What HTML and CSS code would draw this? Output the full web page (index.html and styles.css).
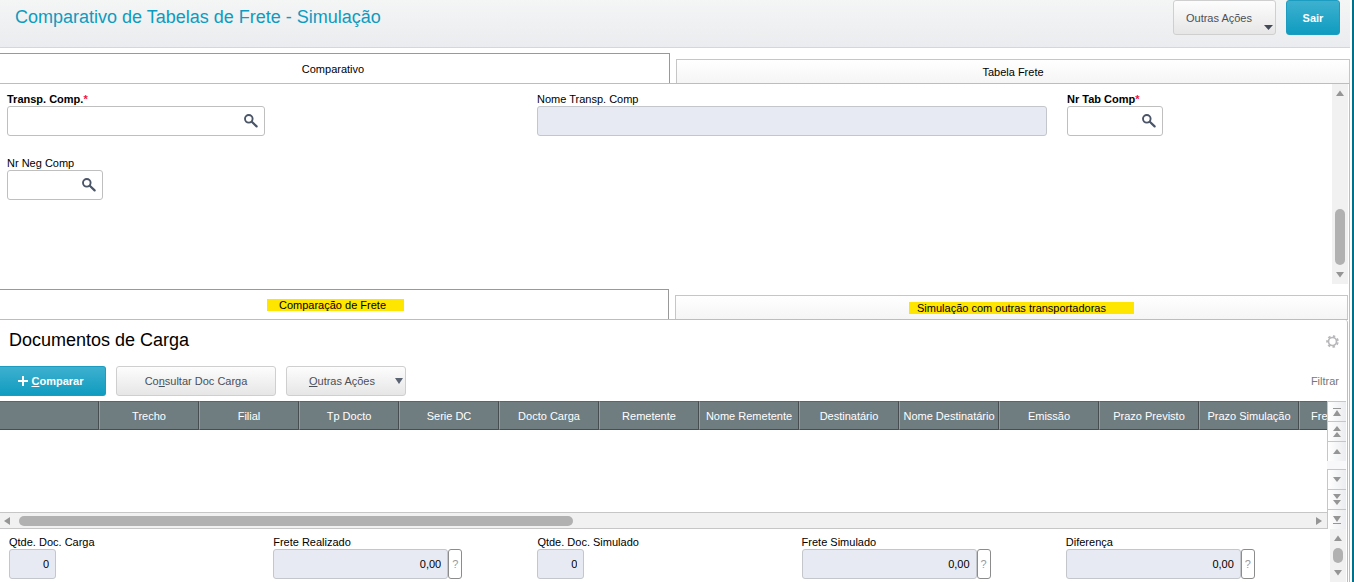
FILE: index.html
```html
<!DOCTYPE html>
<html lang="pt-BR">
<head>
    <meta charset="UTF-8">
    <meta name="viewport" content="width=device-width, initial-scale=1.0">
    <title>Comparativo de Tabelas de Frete - Simulação</title>
    <link rel="stylesheet" href="styles.css">
</head>
<body>
    <!-- Shared icons -->
    <svg class="icon-defs" width="0" height="0" aria-hidden="true">
        <symbol id="icon-search" viewBox="0 0 14 14">
            <circle cx="4.8" cy="4.8" r="3.8" fill="none" stroke="#4a5568" stroke-width="1.9"/>
            <path d="M7.8 7.8l4.8 4.6" stroke="#4a5568" stroke-width="2.2" stroke-linecap="round"/>
        </symbol>
        <symbol id="icon-up" viewBox="0 0 8 6"><path d="M0 6L4 0.5L8 6z"/></symbol>
        <symbol id="icon-down" viewBox="0 0 8 6"><path d="M0 0L4 5.5L8 0z"/></symbol>
    </svg>

    <div class="page">
        <header class="header">
            <h1>Comparativo de Tabelas de Frete - Simulação</h1>
            <div class="header-actions">
                <button type="button" class="btn btn-menu">Outras Ações
                    <svg class="caret" width="9" height="5" viewBox="0 0 9 5"><path d="M0 0h9L4.5 5z" fill="#434a57"/></svg>
                </button>
                <button type="button" class="btn btn-primary btn-exit">Sair</button>
            </div>
        </header>

        <main class="main">
            <nav class="tabs">
                <button type="button" class="tab active">Comparativo</button>
                <button type="button" class="tab">Tabela Frete</button>
            </nav>

            <section class="panel-form">
                <div class="form-grid">
                    <div class="field">
                        <label for="transp" class="required">Transp. Comp.<span>*</span></label>
                        <div class="lookup lookup-wide">
                            <input type="text" id="transp">
                            <button type="button" aria-label="Pesquisar transportadora"><svg width="14" height="14"><use href="#icon-search"/></svg></button>
                        </div>
                    </div>
                    <div class="field field-name">
                        <label for="nome">Nome Transp. Comp</label>
                        <input type="text" id="nome" class="readonly" readonly>
                    </div>
                    <div class="field">
                        <label for="tab" class="required">Nr Tab Comp<span>*</span></label>
                        <div class="lookup">
                            <input type="text" id="tab">
                            <button type="button" aria-label="Pesquisar tabela"><svg width="14" height="14"><use href="#icon-search"/></svg></button>
                        </div>
                    </div>
                    <div class="field">
                        <label for="neg">Nr Neg Comp</label>
                        <div class="lookup">
                            <input type="text" id="neg">
                            <button type="button" aria-label="Pesquisar negociação"><svg width="14" height="14"><use href="#icon-search"/></svg></button>
                        </div>
                    </div>
                </div>
                <div class="scroll-v">
                    <svg width="8" height="6"><use href="#icon-up"/></svg>
                    <div class="thumb thumb-form"></div>
                    <svg width="8" height="6"><use href="#icon-down"/></svg>
                </div>
            </section>

            <div class="lower">
                <nav class="tabs">
                    <button type="button" class="tab active"><mark class="mark-compare">Comparação de Frete</mark></button>
                    <button type="button" class="tab"><mark class="mark-simulate">Simulação com outras transportadoras</mark></button>
                </nav>

                <section class="panel-docs">
                    <div class="docs-head">
                        <h2>Documentos de Carga</h2>
                        <button type="button" class="gear" aria-label="Configurar">
                            <svg width="13" height="13" viewBox="0 0 14 14" fill="none" stroke="#b8b8bb">
                                <circle cx="7" cy="7" r="4.3" stroke-width="1.8"/>
                                <circle cx="7" cy="7" r="5.8" stroke-width="2" stroke-dasharray="2.6 2.606" transform="rotate(10 7 7)"/>
                            </svg>
                        </button>
                    </div>

                    <div class="toolbar">
                        <button type="button" class="btn btn-primary btn-compare">
                            <svg width="10" height="10" viewBox="0 0 10 10"><path d="M5 0v10M0 5h10" stroke="#fff" stroke-width="2"/></svg>
                            <span><u>C</u>omparar</span>
                        </button>
                        <button type="button" class="btn btn-docs"><span>Co<u>n</u>sultar Doc Carga</span></button>
                        <button type="button" class="btn btn-more"><span><u>O</u>utras Ações</span>
                            <svg width="8" height="6" viewBox="0 0 8 6"><path d="M0 0h8L4 6z" fill="#5b6472"/></svg>
                        </button>
                        <a href="#" class="filter">Filtrar</a>
                    </div>

                    <div class="grid">
                        <div class="grid-view">
                            <div class="grid-body">
                                <table>
                                    <thead>
                                        <tr>
                                            <th class="col-first"></th>
                                            <th>Trecho</th>
                                            <th>Filial</th>
                                            <th>Tp Docto</th>
                                            <th>Serie DC</th>
                                            <th>Docto Carga</th>
                                            <th>Remetente</th>
                                            <th>Nome Remetente</th>
                                            <th>Destinatário</th>
                                            <th>Nome Destinatário</th>
                                            <th>Emissão</th>
                                            <th>Prazo Previsto</th>
                                            <th>Prazo Simulação</th>
                                            <th class="col-cut">Fre</th>
                                        </tr>
                                    </thead>
                                    <tbody></tbody>
                                </table>
                            </div>
                            <div class="scroll-h">
                                <svg width="6" height="8" viewBox="0 0 6 8"><path d="M6 0v8L0 4z"/></svg>
                                <div class="track"><div class="thumb thumb-grid"></div></div>
                                <svg width="6" height="8" viewBox="0 0 6 8"><path d="M0 0v8L6 4z"/></svg>
                            </div>
                        </div>
                        <div class="grid-nav">
                            <div class="nav-group">
                                <button type="button" aria-label="Primeiro"><svg width="8" height="8" viewBox="0 0 8 8"><path d="M0 0h8v1H0zM0 8L4 2L8 8z"/></svg></button>
                                <button type="button" aria-label="Página anterior"><svg width="8" height="11" viewBox="0 0 8 11"><path d="M0 5L4 0L8 5zM0 11L4 6L8 11z"/></svg></button>
                                <button type="button" aria-label="Anterior"><svg width="8" height="5" viewBox="0 0 8 5"><path d="M0 5L4 0L8 5z"/></svg></button>
                            </div>
                            <div class="nav-group">
                                <button type="button" aria-label="Próximo"><svg width="8" height="5" viewBox="0 0 8 5"><path d="M0 0L4 5L8 0z"/></svg></button>
                                <button type="button" aria-label="Próxima página"><svg width="8" height="11" viewBox="0 0 8 11"><path d="M0 0L4 5L8 0zM0 6L4 11L8 6z"/></svg></button>
                                <button type="button" aria-label="Último"><svg width="8" height="8" viewBox="0 0 8 8"><path d="M0 0L4 6L8 0zM0 7h8v1H0z"/></svg></button>
                            </div>
                        </div>
                    </div>

                    <div class="totals">
                        <div class="totals-grid">
                            <div class="field">
                                <label for="qtdCarga">Qtde. Doc. Carga</label>
                                <input type="text" id="qtdCarga" class="readonly count" value="0" readonly>
                            </div>
                            <div class="field">
                                <label for="realizado">Frete Realizado</label>
                                <div class="amount">
                                    <input type="text" id="realizado" class="readonly" value="0,00" readonly>
                                    <button type="button" class="help">?</button>
                                </div>
                            </div>
                            <div class="field">
                                <label for="qtdSimulado">Qtde. Doc. Simulado</label>
                                <input type="text" id="qtdSimulado" class="readonly count" value="0" readonly>
                            </div>
                            <div class="field">
                                <label for="simulado">Frete Simulado</label>
                                <div class="amount">
                                    <input type="text" id="simulado" class="readonly" value="0,00" readonly>
                                    <button type="button" class="help">?</button>
                                </div>
                            </div>
                            <div class="field">
                                <label for="diferenca">Diferença</label>
                                <div class="amount">
                                    <input type="text" id="diferenca" class="readonly" value="0,00" readonly>
                                    <button type="button" class="help">?</button>
                                </div>
                            </div>
                        </div>
                        <div class="scroll-v">
                            <svg width="8" height="6"><use href="#icon-up"/></svg>
                            <div class="thumb thumb-totals"></div>
                            <svg width="8" height="6"><use href="#icon-down"/></svg>
                        </div>
                    </div>
                </section>
            </div>
        </main>
    </div>
</body>
</html>
```
FILE: styles.css
```css
* {
    box-sizing: border-box;
}

body {
    margin: 0;
    font-family: "Liberation Sans", Arial, sans-serif;
    font-size: 11px;
    line-height: 13px;
    color: #000;
    background-color: #fff;
}

button,
input {
    font: inherit;
    color: inherit;
    margin: 0;
}

button {
    cursor: pointer;
}

svg {
    display: block;
    flex: none;
}

.icon-defs {
    position: absolute;
}

.page {
    display: flex;
    flex-direction: column;
    height: 100vh;
    padding-right: 2px;
    border-right: 2px solid #00718a;
    overflow: hidden;
}

/* Header */
.header {
    display: flex;
    justify-content: space-between;
    align-items: flex-start;
    flex: none;
    height: 48px;
    padding: 0 10px 0 15px;
    background: linear-gradient(#f4f5f5, #ebecef);
    border-bottom: 1px solid #d5d6d8;
}

.header h1 {
    margin: 6px 0 0;
    font-size: 18px;
    line-height: 22px;
    font-weight: normal;
    color: #0d9bc0;
}

.header-actions {
    display: flex;
    gap: 10px;
}

.header-actions .btn {
    height: 35px;
    padding-top: 2px;
}

.btn {
    display: flex;
    align-items: center;
    justify-content: center;
    height: 30px;
    padding: 0;
    border: 1px solid #cfcfcf;
    border-radius: 3px;
    background: linear-gradient(#fdfdfd, #e6e6e6);
    color: #4b4f59;
}

.btn-primary {
    border-color: #1c9cc0;
    background: linear-gradient(#3eb0cf, #0f9cc0);
    color: #fff;
    font-weight: bold;
}

.btn-menu {
    gap: 12px;
    padding: 0 2px 0 12px;
}

.btn-menu .caret {
    align-self: flex-end;
    margin-bottom: 4px;
}

.btn-exit {
    width: 54px;
}

/* Tabs */
.main {
    display: flex;
    flex-direction: column;
    flex: 1;
    min-height: 0;
    padding-top: 5px;
}

.tabs {
    display: flex;
    align-items: flex-end;
    gap: 6px;
    flex: none;
    margin-left: -4px;
    border-bottom: 1px solid #bdbdbd;
}

.tab {
    flex: 1;
    height: 24px;
    padding: 2px 0 0;
    border: 1px solid #c6c6c6;
    border-bottom: 0;
    background: linear-gradient(#fff, #f5f5f5);
}

.tab.active {
    height: 30px;
    border-color: #999;
    background: #fff;
}

mark {
    display: inline-block;
    line-height: 12px;
    color: inherit;
    background-color: #ffe600;
}

/* the highlight runs further to the right than the caption */
.mark-compare {
    padding: 0 18px 0 12px;
    margin-right: -6px;
}

.mark-simulate {
    padding: 0 28px 0 8px;
    margin-right: -20px;
}

/* Form */
.panel-form {
    display: flex;
    flex: none;
    height: 200px;
    border-right: 1px solid #bdbdbd;
    padding-right: 1px;
}

.form-grid {
    flex: 1;
    display: grid;
    grid-template-columns: repeat(5, 1fr);
    grid-auto-rows: 44px;
    row-gap: 20px;
    padding: 9px 0 0 7px;
}

.field-name {
    grid-column: 3 / span 2;
    padding-right: 20px;
}

.field label {
    display: block;
    white-space: nowrap;
}

.required {
    font-weight: bold;
}

.required span {
    color: #f0143c;
}

.lookup {
    display: flex;
    width: 96px;
    height: 30px;
    border: 1px solid #bfbfbf;
    border-radius: 3px;
    background: #fff;
}

.lookup-wide {
    width: 258px;
}

.lookup input {
    flex: 1;
    min-width: 0;
    padding: 0 6px;
    border: 0;
    background: none;
}

.lookup button {
    display: flex;
    align-items: center;
    padding: 0 6px;
    border: 0;
    background: none;
}

.readonly {
    display: block;
    width: 100%;
    height: 30px;
    padding: 0 6px;
    border: 1px solid #c3c6cb;
    border-radius: 3px;
    background-color: #e7eaf2;
}

/* Scrollbars */
.scroll-v {
    display: flex;
    flex-direction: column;
    align-items: center;
    flex: none;
    width: 16px;
    padding: 6px 0;
    background-color: #f1f1f1;
}

.scroll-v svg,
.scroll-h svg,
.grid-nav svg {
    fill: #959595;
}

.thumb {
    border-radius: 5px;
    background-color: #b1b1b1;
}

.thumb-form {
    width: 10px;
    height: 56px;
    margin: auto 0 7px;
}

.thumb-totals {
    width: 10px;
    height: 15px;
    margin: auto 0;
}

/* Documents */
.lower {
    display: flex;
    flex-direction: column;
    flex: 1;
    min-height: 0;
    padding: 5px 1px 0 0;
    border-right: 1px solid #bdbdbd;
}

.panel-docs {
    display: flex;
    flex-direction: column;
    flex: 1;
    min-height: 0;
    padding-right: 1px;
    border-right: 1px solid #bdbdbd;
    border-radius: 0 3px 0 0;
}

.docs-head {
    display: flex;
    align-items: center;
    justify-content: space-between;
    height: 46px;
    padding: 0 7px 4px 9px;
}

.docs-head h2 {
    margin: 0 0 2px;
    font-size: 18px;
    line-height: 22px;
    font-weight: normal;
}

.gear {
    padding: 0;
    border: 0;
    background: none;
}

.toolbar {
    display: flex;
    align-items: center;
    gap: 10px;
    padding-right: 7px;
    margin-bottom: 5px;
}

.btn-compare {
    width: 106px;
    gap: 4px;
    padding-right: 4px;
    border-left: 0;
    border-radius: 0 3px 3px 0;
}

.btn-docs {
    width: 160px;
}

.btn-more {
    width: 120px;
    justify-content: flex-end;
    gap: 20px;
    padding-right: 2px;
}

.filter {
    margin-left: auto;
    color: #777;
    text-decoration: none;
}

.grid {
    display: flex;
    flex: 1;
    min-height: 0;
}

.grid-view {
    display: flex;
    flex-direction: column;
    flex: 1;
    min-width: 0;
}

.grid-body {
    flex: 1;
    overflow: hidden;
}

table {
    table-layout: fixed;
    width: 1399px;
    border-collapse: separate;
    border-spacing: 0;
}

th {
    width: 100px;
    height: 29px;
    padding: 2px 0 0;
    border: 1px solid #474d50;
    border-top-color: #5c6567;
    border-left-color: #929da0;
    background-color: #6f7d81;
    color: #fff;
    font-weight: normal;
    white-space: nowrap;
}

.col-first {
    width: 99px;
    border-left: 0;
}

.col-cut {
    padding-left: 11px;
    text-align: left;
}

.scroll-h {
    display: flex;
    align-items: center;
    flex: none;
    height: 17px;
    padding: 0 5px 0 4px;
    gap: 9px;
    border: 1px solid #c6c6c6;
    border-width: 1px 0;
    background-color: #f1f1f1;
}

.track {
    flex: 1;
}

.thumb-grid {
    width: 43%;
    height: 10px;
}

.grid-nav {
    display: flex;
    flex-direction: column;
    justify-content: space-between;
    flex: none;
    width: 19px;
    background-color: #f8f8fa;
}

.nav-group {
    display: flex;
    flex-direction: column;
}

.grid-nav button {
    display: flex;
    align-items: center;
    justify-content: center;
    height: 20px;
    padding: 0;
    border: 1px solid #c6c6c6;
    border-width: 1px 0 0 1px;
    background: linear-gradient(to right, #fff, #ebecef);
}

/* Totals */
.totals {
    display: flex;
    flex: none;
    height: 53px;
}

.totals-grid {
    flex: 1;
    display: grid;
    grid-template-columns: repeat(5, 1fr);
    padding: 7px 0 0 9px;
}

.totals .readonly {
    text-align: right;
}

.totals .count {
    width: 47px;
}

.amount {
    display: flex;
    width: 189px;
}

.help {
    flex: none;
    width: 14px;
    height: 30px;
    padding: 0;
    border: 1px solid #8c8c8c;
    border-radius: 3px;
    background: #fff;
    color: #999;
}
```
